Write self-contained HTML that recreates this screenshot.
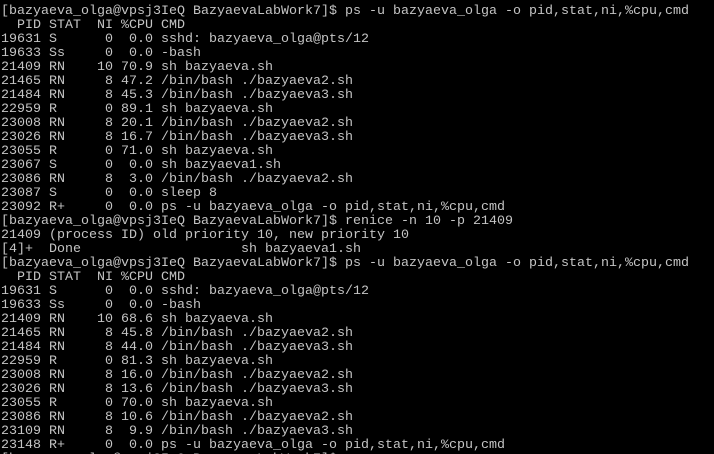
<!DOCTYPE html>
<html><head><meta charset="utf-8"><style>
html,body{margin:0;padding:0;background:#000;width:714px;height:454px;overflow:hidden}
svg{display:block}
text{font-family:"Liberation Mono","DejaVu Sans Mono",monospace;font-size:13px;fill:#c4c4c4;white-space:pre}
</style></head><body>
<svg width="714" height="454" xmlns="http://www.w3.org/2000/svg" xml:space="preserve">
<text x="1" y="14" textLength="688" lengthAdjust="spacingAndGlyphs">[bazyaeva_olga@vpsj3IeQ BazyaevaLabWork7]$ ps -u bazyaeva_olga -o pid,stat,ni,%cpu,cmd</text>
<text x="1" y="28" textLength="184" lengthAdjust="spacingAndGlyphs">  PID STAT  NI %CPU CMD</text>
<text x="1" y="42" textLength="368" lengthAdjust="spacingAndGlyphs">19631 S      0  0.0 sshd: bazyaeva_olga@pts/12</text>
<text x="1" y="56" textLength="200" lengthAdjust="spacingAndGlyphs">19633 Ss     0  0.0 -bash</text>
<text x="1" y="70" textLength="272" lengthAdjust="spacingAndGlyphs">21409 RN    10 70.9 sh bazyaeva.sh</text>
<text x="1" y="84" textLength="352" lengthAdjust="spacingAndGlyphs">21465 RN     8 47.2 /bin/bash ./bazyaeva2.sh</text>
<text x="1" y="98" textLength="352" lengthAdjust="spacingAndGlyphs">21484 RN     8 45.3 /bin/bash ./bazyaeva3.sh</text>
<text x="1" y="112" textLength="272" lengthAdjust="spacingAndGlyphs">22959 R      0 89.1 sh bazyaeva.sh</text>
<text x="1" y="126" textLength="352" lengthAdjust="spacingAndGlyphs">23008 RN     8 20.1 /bin/bash ./bazyaeva2.sh</text>
<text x="1" y="140" textLength="352" lengthAdjust="spacingAndGlyphs">23026 RN     8 16.7 /bin/bash ./bazyaeva3.sh</text>
<text x="1" y="154" textLength="272" lengthAdjust="spacingAndGlyphs">23055 R      0 71.0 sh bazyaeva.sh</text>
<text x="1" y="168" textLength="280" lengthAdjust="spacingAndGlyphs">23067 S      0  0.0 sh bazyaeva1.sh</text>
<text x="1" y="182" textLength="352" lengthAdjust="spacingAndGlyphs">23086 RN     8  3.0 /bin/bash ./bazyaeva2.sh</text>
<text x="1" y="196" textLength="216" lengthAdjust="spacingAndGlyphs">23087 S      0  0.0 sleep 8</text>
<text x="1" y="210" textLength="504" lengthAdjust="spacingAndGlyphs">23092 R+     0  0.0 ps -u bazyaeva_olga -o pid,stat,ni,%cpu,cmd</text>
<text x="1" y="224" textLength="512" lengthAdjust="spacingAndGlyphs">[bazyaeva_olga@vpsj3IeQ BazyaevaLabWork7]$ renice -n 10 -p 21409</text>
<text x="1" y="238" textLength="408" lengthAdjust="spacingAndGlyphs">21409 (process ID) old priority 10, new priority 10</text>
<text x="1" y="252" textLength="360" lengthAdjust="spacingAndGlyphs">[4]+  Done                    sh bazyaeva1.sh</text>
<text x="1" y="266" textLength="688" lengthAdjust="spacingAndGlyphs">[bazyaeva_olga@vpsj3IeQ BazyaevaLabWork7]$ ps -u bazyaeva_olga -o pid,stat,ni,%cpu,cmd</text>
<text x="1" y="280" textLength="184" lengthAdjust="spacingAndGlyphs">  PID STAT  NI %CPU CMD</text>
<text x="1" y="294" textLength="368" lengthAdjust="spacingAndGlyphs">19631 S      0  0.0 sshd: bazyaeva_olga@pts/12</text>
<text x="1" y="308" textLength="200" lengthAdjust="spacingAndGlyphs">19633 Ss     0  0.0 -bash</text>
<text x="1" y="322" textLength="272" lengthAdjust="spacingAndGlyphs">21409 RN    10 68.6 sh bazyaeva.sh</text>
<text x="1" y="336" textLength="352" lengthAdjust="spacingAndGlyphs">21465 RN     8 45.8 /bin/bash ./bazyaeva2.sh</text>
<text x="1" y="350" textLength="352" lengthAdjust="spacingAndGlyphs">21484 RN     8 44.0 /bin/bash ./bazyaeva3.sh</text>
<text x="1" y="364" textLength="272" lengthAdjust="spacingAndGlyphs">22959 R      0 81.3 sh bazyaeva.sh</text>
<text x="1" y="378" textLength="352" lengthAdjust="spacingAndGlyphs">23008 RN     8 16.0 /bin/bash ./bazyaeva2.sh</text>
<text x="1" y="392" textLength="352" lengthAdjust="spacingAndGlyphs">23026 RN     8 13.6 /bin/bash ./bazyaeva3.sh</text>
<text x="1" y="406" textLength="272" lengthAdjust="spacingAndGlyphs">23055 R      0 70.0 sh bazyaeva.sh</text>
<text x="1" y="420" textLength="352" lengthAdjust="spacingAndGlyphs">23086 RN     8 10.6 /bin/bash ./bazyaeva2.sh</text>
<text x="1" y="434" textLength="352" lengthAdjust="spacingAndGlyphs">23109 RN     8  9.9 /bin/bash ./bazyaeva3.sh</text>
<text x="1" y="448" textLength="504" lengthAdjust="spacingAndGlyphs">23148 R+     0  0.0 ps -u bazyaeva_olga -o pid,stat,ni,%cpu,cmd</text>
<text x="1" y="462" textLength="336" lengthAdjust="spacingAndGlyphs">[bazyaeva_olga@vpsj3IeQ BazyaevaLabWork7]$</text>
</svg>
</body></html>
